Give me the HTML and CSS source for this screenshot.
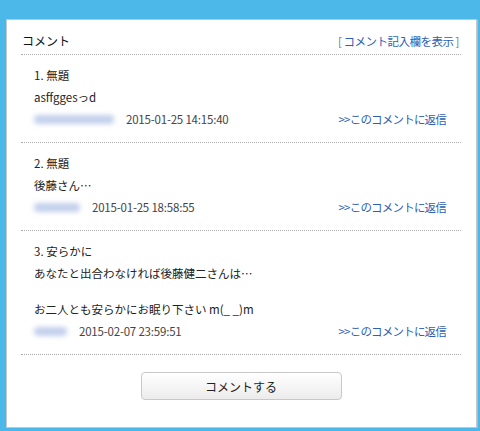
FILE: index.html
```html
<!DOCTYPE html>
<html lang="ja">
<head>
  <meta charset="UTF-8" />
  <title>コメント</title>
  <link rel="stylesheet" href="styles.css">
</head>
<body>
  <div class="panel">
    <div class="panel-head">
      <span class="panel-title">コメント</span>
      <span class="toggle">[ <a href="#">コメント記入欄を表示</a> ]</span>
    </div>

    <div class="comment">
      <div class="c-title">1. 無題</div>
      <div class="c-body">asffggesっd</div>
      <div class="c-meta">
        <span class="c-name name-l"></span>
        <span class="c-date">2015-01-25 14:15:40</span>
        <a href="#" class="c-reply">&gt;&gt;このコメントに返信</a>
      </div>
    </div>

    <div class="comment">
      <div class="c-title">2. 無題</div>
      <div class="c-body">後藤さん…</div>
      <div class="c-meta">
        <span class="c-name name-m"></span>
        <span class="c-date">2015-01-25 18:58:55</span>
        <a href="#" class="c-reply">&gt;&gt;このコメントに返信</a>
      </div>
    </div>

    <div class="comment">
      <div class="c-title">3. 安らかに</div>
      <div class="c-body">あなたと出合わなければ後藤健二さんは…<br><br>お二人とも安らかにお眠り下さい m(_ _)m</div>
      <div class="c-meta">
        <span class="c-name name-s"></span>
        <span class="c-date">2015-02-07 23:59:51</span>
        <a href="#" class="c-reply">&gt;&gt;このコメントに返信</a>
      </div>
    </div>

    <div class="actions">
      <button class="comment-btn">コメントする</button>
    </div>
  </div>
</body>
</html>
```

FILE: styles.css
```css
body {
  margin: 0;
  background-color: #4cb7e9;
  font-family: "Noto Sans CJK JP", "Liberation Sans", sans-serif;
  font-size: 11.5px;
  color: #222;
  padding: 19px 4px 0 6px;
}
a {
  color: #2d5fb4;
  text-decoration: none;
}
.panel {
  width: 440px;
  height: 373px;
  background-color: #fff;
  border: 1px solid #c6c6c6;
  box-shadow: 1px 1px 0 #b8b8b8;
  padding: 12px 15px 22px 14px;
}
.panel-head {
  display: flex;
  justify-content: space-between;
  align-items: center;
  line-height: 18px;
  padding-bottom: 4px;
  border-bottom: 1px dotted #aaa;
}
.panel-title {
  font-size: 12px;
  color: #111;
  padding-left: 1px;
}
.toggle {
  color: #777;
  padding-right: 2px;
  letter-spacing: -0.5px;
}
.comment {
  padding: 10px 15px 13px 13px;
  border-bottom: 1px dotted #aaa;
}
.c-title {
  line-height: 20px;
}
.c-body {
  line-height: 18px;
  margin: 3px 0;
}
.c-meta {
  display: flex;
  align-items: center;
  line-height: 20px;
  margin-top: 3px;
}
.c-name {
  display: inline-block;
  height: 9px;
  border-radius: 4px;
  background-color: #c3d0ec;
  filter: blur(2.5px);
  margin-right: 12px;
}
.name-l { width: 80px; }
.name-m { width: 46px; }
.name-s { width: 33px; }
.c-date {
  color: #444;
  letter-spacing: -0.2px;
}
.c-reply {
  margin-left: auto;
  letter-spacing: -0.8px;
}
.actions {
  display: flex;
  justify-content: center;
  padding-top: 17px;
}
.comment-btn {
  width: 201px;
  height: 28px;
  border: 1px solid #c8c8c8;
  border-radius: 4px;
  background: linear-gradient(#ffffff, #ececec);
  font-family: inherit;
  font-size: 12px;
  color: #222;
  cursor: pointer;
}
```
